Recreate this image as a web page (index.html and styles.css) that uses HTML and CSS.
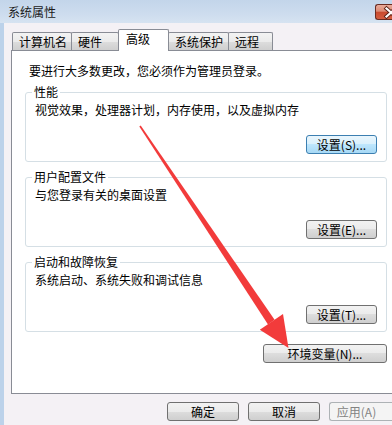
FILE: index.html
```html
<!DOCTYPE html>
<html lang="zh-CN">
<head>
<meta charset="utf-8">
<title>系统属性</title>
<link rel="stylesheet" href="styles.css">
</head>
<body>
<div class="window">
  <div class="titlebar">
    <span class="title">系统属性</span>
    <span class="close">
      <svg class="close-x" width="16" height="15" viewBox="0 0 16 15">
        <path d="M10.5 3.5 L19.5 11.5 M19.5 3.5 L10.5 11.5" stroke="#5a2218" stroke-width="4" stroke-linecap="square"/>
        <path d="M10.5 3.5 L19.5 11.5 M19.5 3.5 L10.5 11.5" stroke="#ffffff" stroke-width="2.2" stroke-linecap="square"/>
      </svg>
    </span>
  </div>
  <div class="client">
    <div class="tabs">
      <div class="tab t1">计算机名</div>
      <div class="tab t2">硬件</div>
      <div class="tab t3 active">高级</div>
      <div class="tab t4">系统保护</div>
      <div class="tab t5">远程</div>
    </div>
    <div class="panel">
      <p class="intro">要进行大多数更改，您必须作为管理员登录。</p>
      <fieldset class="group">
        <legend>性能</legend>
        <p class="desc">视觉效果，处理器计划，内存使用，以及虚拟内存</p>
        <div class="row"><button class="btn focus">设置(S)...</button></div>
      </fieldset>
      <fieldset class="group">
        <legend>用户配置文件</legend>
        <p class="desc">与您登录有关的桌面设置</p>
        <div class="row"><button class="btn">设置(E)...</button></div>
      </fieldset>
      <fieldset class="group">
        <legend>启动和故障恢复</legend>
        <p class="desc">系统启动、系统失败和调试信息</p>
        <div class="row"><button class="btn">设置(T)...</button></div>
      </fieldset>
      <div class="row env"><button class="btn wide">环境变量(N)...</button></div>
    </div>
    <div class="footer">
      <button class="btn">确定</button>
      <button class="btn">取消</button>
      <button class="btn disabled cut">应用(A)</button>
    </div>
  </div>
</div>
<svg class="arrow" width="392" height="425" viewBox="0 0 392 425">
  <polygon fill="#f23b3b" points="140.7,125.4 139.3,126.6 268.0,324.4 274.6,319.8"/>
  <polygon fill="#f23b3b" points="283.0,314.0 259.8,329.8 288.5,348"/>
</svg>
</body>
</html>
```

FILE: styles.css
```css
html, body {
  margin: 0;
  width: 392px;
  height: 425px;
  overflow: hidden;
}

body {
  position: relative;
  background: #f4f1f5;
  font-family: "Noto Sans CJK SC", "Noto Sans", sans-serif;
  font-size: 12px;
  line-height: 16px;
  color: #000;
}

.window {
  width: 392px;
  height: 425px;
  display: flex;
  flex-direction: column;
}

.titlebar {
  flex: none;
  height: 23px;
  display: flex;
  align-items: flex-start;
  padding-left: 8px;
  background: linear-gradient(to bottom, #c3d5ea 0%, #cddcee 60%, #d6e3f1 100%);
}

.title {
  margin-top: 5px;
  line-height: 14px;
  color: #1a1a1a;
}

.close {
  margin-left: auto;
  margin-top: 4px;
  width: 17px;
  height: 16px;
  box-sizing: border-box;
  border: 1px solid #6a2c22;
  border-right: none;
  border-radius: 3px 0 0 3px;
  background: linear-gradient(to bottom, #e9ab9b 0%, #dc8a74 45%, #c84a2e 50%, #d45d40 100%);
  display: flex;
  overflow: hidden;
}

.close-x {
  flex: none;
}

.client {
  flex: 1;
  display: flex;
  flex-direction: column;
  border-left: 4px solid #bcd2ea;
  padding: 6px 0 0 7px;
}

.tabs {
  position: relative;
  z-index: 1;
  display: flex;
  align-items: flex-end;
  height: 21px;
  padding-left: 1px;
}

.tab {
  position: relative;
  box-sizing: border-box;
  height: 18px;
  padding-left: 6px;
  line-height: 17px;
  border: 1px solid #898c95;
  border-bottom: none;
  border-radius: 2px 2px 0 0;
  background: linear-gradient(to bottom, #f3f3f3 0%, #ebebeb 50%, #dddddd 50%, #cfcfcf 100%);
  margin-left: -1px;
}

.tab:first-child {
  margin-left: 0;
}

.t1 { width: 60px; }
.t2 { width: 48px; }
.t3 { width: 51px; }
.t4 { width: 61px; }
.t5 { width: 45px; }

.tab.active {
  z-index: 2;
  height: 22px;
  margin-bottom: -1px;
  padding-left: 7px;
  line-height: 18px;
  background: #ffffff;
}

.panel {
  box-sizing: border-box;
  height: 344px;
  flex: none;
  background: #ffffff;
  border: 1px solid #898c95;
  border-right: none;
  padding: 0 5px 0 13px;
}

.intro {
  margin: 12px 0 0 4px;
  line-height: 16px;
}

.group {
  margin: 8px 0 0;
  padding: 0 9px 7px 8px;
  border: 1px solid #d5dfe5;
  border-radius: 3px;
  min-width: 0;
}

.intro + .group {
  margin-top: 6px;
}

.group legend {
  padding: 0 2px;
  margin-left: -2px;
  line-height: 14px;
}

.desc {
  margin: 3px 0 0 1px;
  line-height: 16px;
}

.row {
  display: flex;
  justify-content: flex-end;
  margin-top: 17px;
}

.row.env {
  margin-top: 12px;
}

.btn {
  box-sizing: border-box;
  width: 71px;
  height: 19px;
  padding: 0;
  font: inherit;
  line-height: 17px;
  color: #000;
  border: 1px solid #707070;
  border-radius: 3px;
  background: linear-gradient(to bottom, #f2f2f2 0%, #ebebeb 50%, #dddddd 50%, #cfcfcf 100%);
  text-align: center;
}

.btn.focus {
  border-color: #3c7fb1;
  background: linear-gradient(to bottom, #eaf6fd 0%, #d9f0fc 50%, #bee6fd 50%, #a7d9f5 100%);
}

.btn.wide {
  width: 124px;
}

.btn.disabled {
  border-color: #adb2b5;
  background: #f4f4f4;
  color: #838383;
}

.footer {
  display: flex;
  justify-content: flex-end;
  gap: 9px;
  margin-top: 8px;
}

.footer .btn {
  width: 72px;
}

.footer .btn.cut {
  width: 63px;
  padding-right: 9px;
  border-right: none;
  border-radius: 3px 0 0 3px;
}

.arrow {
  position: absolute;
  left: 0;
  top: 0;
  pointer-events: none;
}
```
